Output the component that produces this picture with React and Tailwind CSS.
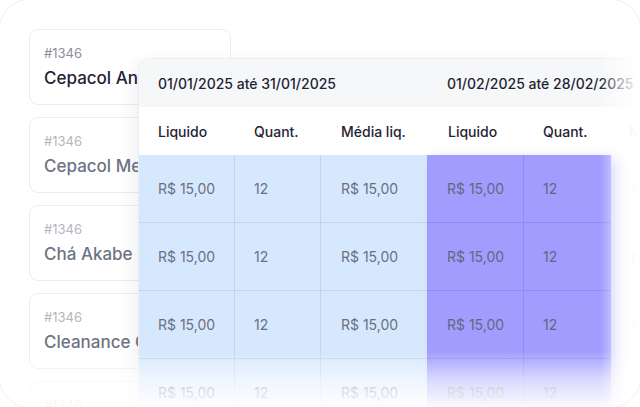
import React from "react";

const font = { fontFamily: "Inter, 'Noto Sans', sans-serif" };

const cards = [
  { name: "Cepacol Antisséptico", active: true },
  { name: "Cepacol Menta" },
  { name: "Chá Akabe" },
  { name: "Cleanance Gel" },
  { name: "Cetaphil" },
];

const ProductCard = ({ name, active }) => (
  <div className="h-[76px] shrink-0 rounded-[9px] border border-[#ebecf1] bg-white px-[14px] pt-[14px] overflow-hidden">
    <div className={`text-[13px] leading-[18px] ${active ? "text-[#8b8f99]" : "text-[#b3b7c0]"}`}>#1346</div>
    <div className={`mt-[4px] whitespace-nowrap text-[17px] leading-[24px] font-medium ${active ? "text-[#1f2433]" : "text-[#6e7383]"}`}>{name}</div>
  </div>
);

const rows = [0, 1, 2, 3];

const App = () => {
  return (
    <div className="relative h-[407px] w-[640px] overflow-hidden bg-white" style={font}>
      {/* product list */}
      <div className="flex w-[231px] flex-col gap-[12px] pl-[29px] pt-[29px]">
        {cards.map((c, i) => (
          <ProductCard key={i} {...c} />
        ))}
      </div>

      {/* comparison table floating over the list */}
      <div className="absolute left-[138px] top-[58px] w-[600px] overflow-hidden rounded-tl-[12px] border-l border-t border-[#eceef2] bg-white shadow-[-6px_4px_16px_rgba(20,30,60,0.06)]">
        <div className="flex h-[48px] items-center bg-[#f6f7f9] text-[14px] font-medium text-[#1f2433]">
          <div className="w-[288px] pl-[19px]">01/01/2025 até 31/01/2025</div>
          <div className="pl-[20px]">01/02/2025 até 28/02/2025</div>
        </div>
        <div className="grid h-[48px] grid-cols-[96px_86px_106px_96px_86px_106px] items-center text-[14px] font-medium text-[#1f2433]">
          <div className="pl-[19px]">Liquido</div>
          <div className="pl-[19px]">Quant.</div>
          <div className="pl-[20px]">Média liq.</div>
          <div className="pl-[21px]">Liquido</div>
          <div className="pl-[20px]">Quant.</div>
          <div className="pl-[20px] text-[#c9ccd3]">Média liq.</div>
        </div>
        <div className="flex text-[14px] text-[#6b7080]">
          <div className="w-[288px] bg-[#d6e8fd]">
            {rows.map((r) => (
              <div key={r} className="grid h-[68px] grid-cols-[96px_86px_106px] border-b border-[#c3d5ec]">
                <div className="flex items-center border-r border-[#c3d5ec] pl-[19px]">R$ 15,00</div>
                <div className="flex items-center border-r border-[#c3d5ec] pl-[19px]">12</div>
                <div className="flex items-center pl-[20px]">R$ 15,00</div>
              </div>
            ))}
          </div>
          <div className="w-[184px] bg-[#a09dfe] text-[#66667e] shadow-[8px_4px_12px_rgba(150,146,254,0.45)]">
            {rows.map((r) => (
              <div key={r} className="grid h-[68px] grid-cols-[97px_87px] border-b border-[#8f8bf0]">
                <div className="flex items-center border-r border-[#8f8bf0] pl-[20px]">R$ 15,00</div>
                <div className="flex items-center pl-[19px]">12</div>
              </div>
            ))}
          </div>
          <div className="w-[106px] text-[#d4d6dc]">
            {rows.map((r) => (
              <div key={r} className="flex h-[68px] items-center pl-[20px]">R$ 15,00</div>
            ))}
          </div>
        </div>
      </div>

      {/* soft fades */}
      <div className="pointer-events-none absolute right-0 top-0 h-full w-[40px] bg-linear-to-r from-white/0 via-white/60 to-white" />
      <div className="pointer-events-none absolute bottom-0 left-0 h-[56px] w-full bg-linear-to-b from-white/0 via-white/60 to-white/95" />

      {/* faint outer frame */}
      <div className="pointer-events-none absolute -left-[2px] -top-[2px] h-[411px] w-[644px] rounded-[34px] border border-[#eef0f4]" />
    </div>
  );
};

export default App;
